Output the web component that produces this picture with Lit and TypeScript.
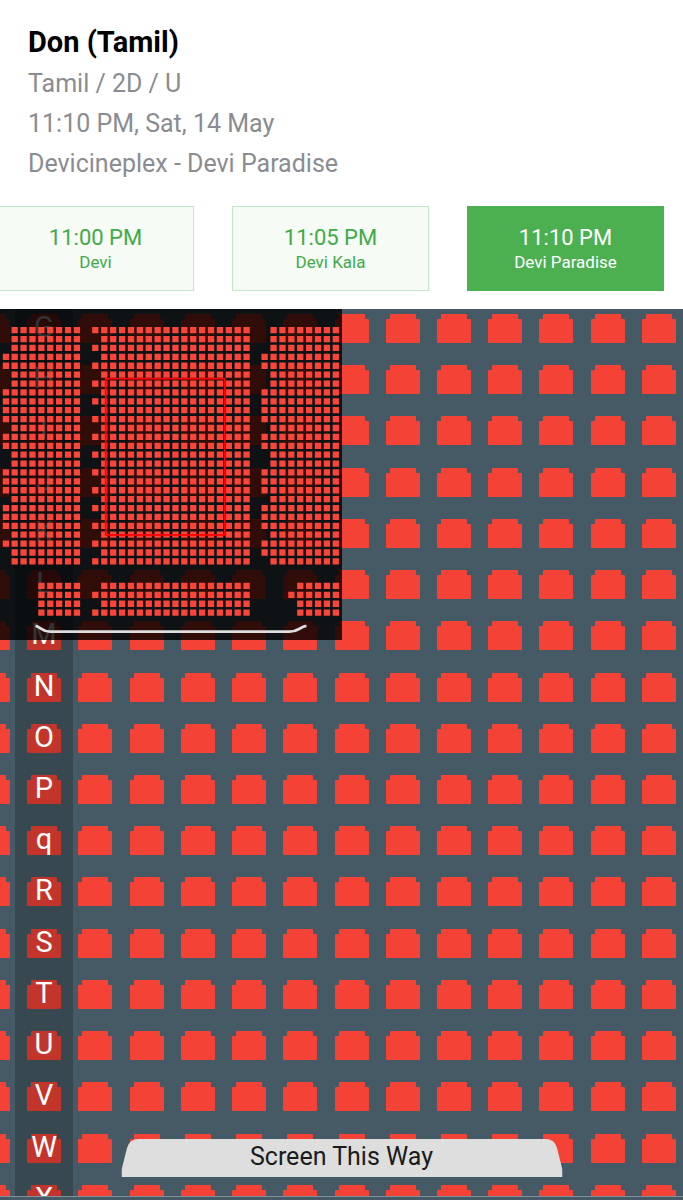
import { LitElement, html, svg, css } from 'lit';
import { customElement, state } from 'lit/decorators.js';
import { classMap } from 'lit/directives/class-map.js';

const ROWS = ['G', 'H', 'I', 'J', 'K', 'L', 'M', 'N', 'O', 'P', 'q', 'R', 'S', 'T', 'U', 'V', 'W', 'X'];
const SEATS = Array.from({ length: 14 }, (_, i) => i + 1);

const SHOWS = [
  { time: '11:00 PM', screen: 'Devi' },
  { time: '11:05 PM', screen: 'Devi Kala' },
  { time: '11:10 PM', screen: 'Devi Paradise' },
];

const range = (n: number) => Array.from({ length: n }, (_, i) => i);
const PITCH = 8.88;

@customElement('seat-overview')
export class SeatOverview extends LitElement {
  static styles = css`
    :host { display: block; background: rgba(0, 0, 0, 0.8); }
    .map { display: block; width: 100%; height: auto; }
    .seats { fill: #f94638; }
    .viewport { fill: none; stroke: #f00; stroke-width: 1.8; }
    .screen { fill: none; stroke: #dedede; stroke-width: 2.8; }
  `;

  private block(x: number, y: number, cols: number, rows: number) {
    return range(rows)
      .map((r) => range(cols).map((c) => this.dot(x + c * PITCH, y + r * PITCH)).join(''))
      .join('');
  }

  private dot(x: number, y: number) {
    return `M${x.toFixed(2)} ${y.toFixed(2)}h6.3v6.3h-6.3z`;
  }

  private column(x: number, y: number, rows: number[]) {
    return rows.map((r) => this.dot(x, y + r * PITCH)).join('');
  }

  render() {
    const top = 18;
    const low = 273.4;
    const aisle = [3, 4, 7, 8, 9, 10, 12, 13, 16, 17, 18, 20, 21, 22, 24];
    const d = [
      this.block(11.5, top, 8, 27),
      this.block(101, top, 17, 27),
      this.block(270, top, 8, 27),
      this.column(2.8, top, aisle),
      this.column(92, top, range(14).map((r) => r * 2)),
      this.column(261.1, top, [...aisle, 25]),
      this.block(38.2, low, 5, 4),
      this.block(101, low, 17, 4),
      this.block(296.7, low, 5, 4),
      this.column(92, low, [1, 3]),
      this.column(287.8, low, [1]),
    ].join('');
    return html`<svg class="map" viewBox="0 0 341 331" role="img" aria-label="Hall overview">
      ${svg`<path class="seats" d=${d} />
      <rect class="viewport" x="105.6" y="69.6" width="118.800" height="156" />
      <path class="screen" d="M35.500 316.500C41 317.500 42 322.200 50 322.200H289C298 322.200 299 317.500 306 316.500" />`}
    </svg>`;
  }
}

@customElement('app-root')
export class AppRoot extends LitElement {
  @state() private selected = 2;

  static styles = css`
    :host {
      display: flex;
      flex-direction: column;
      height: 100vh;
      overflow: hidden;
      background: #fff;
      font-family: Roboto, "Noto Sans", sans-serif;
    }
    .details { padding: 20px 28px 0; }
    .title { margin: 0; font-size: 29px; line-height: 44px; font-weight: 700; color: #000; }
    .line { margin: 0; font-size: 25px; line-height: 40px; color: #8a8c92; }
    .shows {
      display: flex;
      justify-content: flex-end;
      gap: 38px;
      padding: 22px 19px 18px;
    }
    .show {
      flex: none;
      box-sizing: border-box;
      width: 197px;
      height: 85px;
      padding: 0;
      border: 1px solid #c5e6c7;
      border-radius: 0;
      background: #f6fbf6;
      color: #41aa46;
      font-family: inherit;
      cursor: pointer;
    }
    .show.active { background: #4caf50; border-color: #4caf50; color: #fff; }
    .time { display: block; font-size: 22px; line-height: 26px; }
    .screen-name { display: block; font-size: 17px; line-height: 22px; }
    .hall {
      position: relative;
      flex: 1;
      min-height: 0;
      overflow: hidden;
      background: #455a64;
      border-bottom: 1px solid #83919a;
    }
    .seats {
      display: grid;
      grid-template-columns: repeat(14, 1fr);
      grid-template-rows: repeat(18, 1fr);
      height: 922px;
      margin: 5px -10px 0 -24px;
    }
    .seat {
      display: block;
      justify-self: start;
      align-self: start;
      padding: 0;
      border: 0;
      background: none;
    }
    .seat-shape { display: block; width: 34px; height: 29px; fill: #f44336; }
    .rail {
      position: absolute;
      top: 0;
      left: 15px;
      display: grid;
      grid-template-rows: repeat(18, 1fr);
      box-sizing: border-box;
      width: 58px;
      height: 922px;
      margin: 0;
      padding: 0;
      list-style: none;
      background: rgba(0, 0, 0, 0.2);
      color: #fff;
      font-size: 29px;
      line-height: 36px;
      text-align: center;
    }
    .overview { position: absolute; top: 0; left: 0; width: 50%; }
    .banner {
      position: absolute;
      bottom: 19px;
      left: 50%;
      display: grid;
      width: 441px;
      transform: translateX(-50%);
      color: #1b1b1b;
      font-size: 25px;
      text-align: center;
    }
    .banner-shape, .banner-text { grid-area: 1 / 1; }
    .banner-shape { width: 100%; height: 38px; fill: #dedede; }
    .banner-text { position: relative; line-height: 36px; }
    .footer { flex: none; height: 3px; background: #455a64; }
  `;

  render() {
    return html`
      <header class="details">
        <h1 class="title">Don (Tamil)</h1>
        <p class="line">Tamil / 2D / U</p>
        <p class="line">11:10 PM, Sat, 14 May</p>
        <p class="line">Devicineplex - Devi Paradise</p>
      </header>
      <nav class="shows" aria-label="Show times">
        ${SHOWS.map((s, i) => html`
          <button
            type="button"
            class=${classMap({ show: true, active: i === this.selected })}
            aria-pressed=${i === this.selected}
            @click=${() => (this.selected = i)}
          ><span class="time">${s.time}</span><span class="screen-name">${s.screen}</span></button>`)}
      </nav>
      <main class="hall">
        <div class="seats">
          ${ROWS.map((row) => SEATS.map((n) => html`
            <button type="button" class="seat" aria-label="Row ${row} seat ${n}" disabled>
              <svg class="seat-shape" viewBox="0 0 34 29">
                <path d="M5 0H29Q30 0 30 1V5H33Q34 5 34 6V28Q34 29 33 29H1Q0 29 0 28V6Q0 5 1 5H4V1Q4 0 5 0Z" />
              </svg>
            </button>`))}
        </div>
        <ul class="rail">${ROWS.map((row) => html`<li>${row}</li>`)}</ul>
        <seat-overview class="overview"></seat-overview>
        <div class="banner">
          <svg class="banner-shape" viewBox="0 0 441 38" preserveAspectRatio="none" aria-hidden="true">
            <path d="M0 38V31L5.500 9Q8 0 17 0H424Q433 0 435.500 9L441 31V38Z" />
          </svg>
          <span class="banner-text">Screen This Way</span>
        </div>
      </main>
      <div class="footer"></div>
    `;
  }
}
